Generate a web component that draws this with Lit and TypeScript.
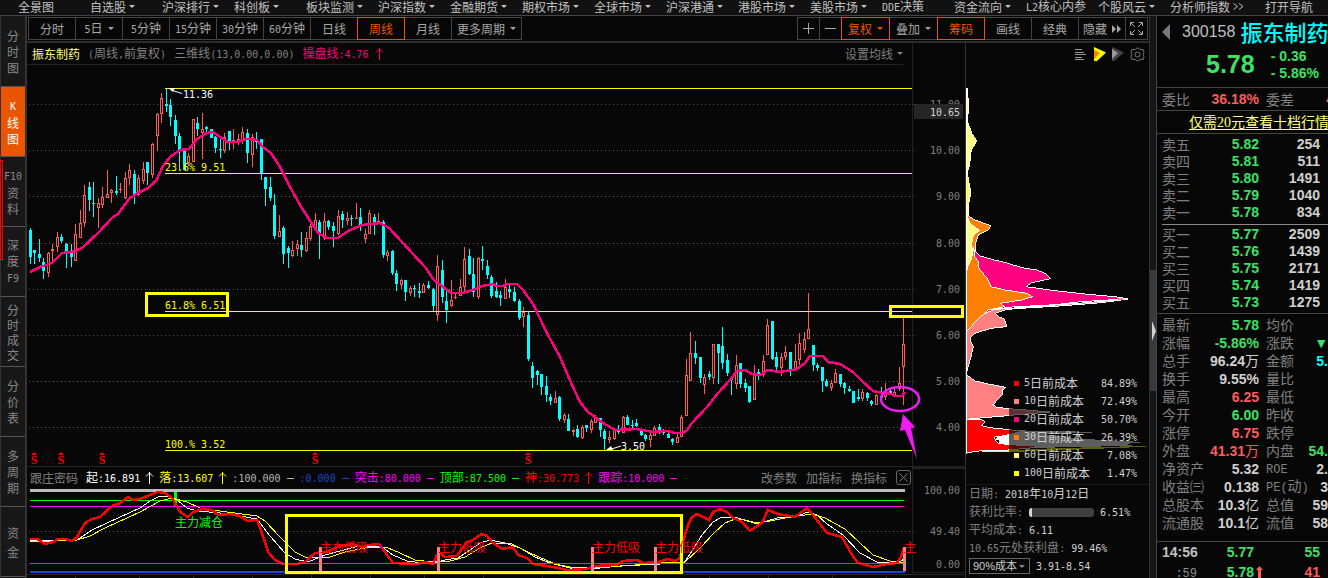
import { LitElement, html, svg, css } from 'lit';
import { customElement } from 'lit/decorators.js';
import { classMap } from 'lit/directives/class-map.js';

/** Wraps runs of ASCII characters so that they get the narrow figure face. */
const mix = (text: string) =>
  text.split(/([\x21-\x7e]+)/).map((part) => (/^[\x21-\x7e]+$/.test(part) ? html`<span class="m">${part}</span>` : part));

const caret = html`<i class="caret"></i>`;

/* direction (u/d), high, body top, body bottom, low: one record per week */
const CANDLES = `d228 230 257 264,d250 250 253 264,d239 254 258 262,d258 262 271 279,u252 253 273 277,u244 249 251 262,u232 237 247 252,d234 237 241 243,d243 244 251 268,d244 252 257 267,
u224 234 261 261,u210 223 238 238,u185 195 223 227,d182 187 200 211,d182 203 204 217,u198 203 208 228,u187 197 205 208,u170 194 198 198,u189 190 193 203,d176 191 193 195,
u183 189 190 193,u172 178 198 199,u164 170 178 185,d170 174 195 204,u175 178 195 196,u162 169 181 184,d162 162 173 185,u143 144 175 178,u113 114 136 151,u93 98 114 123,
d88 104 106 112,d99 105 117 126,d115 120 136 144,d133 136 150 170,d150 150 170 170,u153 156 163 166,u119 119 162 162,d117 123 129 136,u113 129 133 159,d126 127 129 132,
d129 129 138 138,d136 137 148 153,d138 149 150 158,u133 137 151 153,d131 131 141 150,u129 140 142 149,u134 139 141 145,u127 132 140 144,d129 133 153 163,u134 137 155 167,
d132 140 142 149,d139 139 173 180,d177 177 189 206,d177 187 198 201,d194 205 236 239,u215 231 237 237,d226 228 254 264,d246 248 253 268,u241 250 256 257,u240 244 249 256,
d232 245 250 257,u232 238 251 252,u220 226 239 241,u213 220 228 230,d220 222 234 259,u213 221 238 240,d220 221 227 230,d222 226 231 247,u210 216 234 235,d211 214 220 228,
u212 218 221 225,d215 218 219 226,u203 218 219 219,d208 217 226 231,u229 234 239 243,u210 213 234 234,d214 217 222 235,u213 221 223 223,d220 222 255 258,u250 252 256 261,
d250 251 273 275,d270 273 284 291,u279 280 285 289,d280 280 292 301,u286 288 293 296,d285 288 289 297,d283 291 293 298,u283 285 293 293,d281 285 288 289,d288 289 306 311,
u255 266 315 321,d260 270 297 303,d290 301 310 323,u280 300 306 307,u293 297 298 299,u279 287 296 296,u247 259 287 291,d249 256 274 275,d258 274 292 297,u257 258 297 299,
d246 259 261 270,d260 266 275 279,d275 277 296 298,d282 291 297 298,d291 295 298 306,u279 287 299 299,d285 289 292 298,d287 292 301 302,d299 301 318 320,u307 312 317 327,
d312 315 359 361,d362 366 378 388,d370 371 375 385,d374 374 387 395,d376 386 395 402,d394 397 401 405,u391 398 403 403,d396 397 419 421,u413 415 420 423,d414 419 431 431,
u429 430 432 436,d425 429 437 438,u425 427 438 439,d425 425 428 432,u419 421 430 433,u415 417 423 423,d418 418 430 437,d429 431 439 450,u431 437 440 443,u429 430 439 440,
d425 430 432 434,u416 417 433 433,d415 417 425 425,d420 425 426 428,d419 423 426 427,d430 430 435 436,d434 435 439 441,u432 435 440 447,u426 428 436 436,d424 427 432 434,
d429 431 433 435,d433 434 438 438,d438 439 442 445,u433 437 443 443,u415 417 437 437,u359 375 416 416,u332 353 381 381,d341 353 358 364,d357 357 378 383,u374 377 385 394,
d371 374 377 380,u344 344 378 384,d344 344 353 384,d327 346 363 369,d354 360 373 376,d376 377 380 395,u355 365 384 389,d363 363 384 388,d379 383 388 392,d386 386 402 403,
u365 375 400 400,d369 372 374 380,u355 361 375 377,u319 325 355 355,d321 321 359 360,d352 357 367 370,u353 357 368 376,u346 352 357 360,d352 352 370 376,u344 361 370 370,
u333 343 360 365,u332 339 350 353,u293 329 339 339,d345 345 365 371,d363 365 368 371,d367 367 381 392,d379 381 386 387,u380 383 388 391,u369 373 383 383,d374 374 384 387,
d382 383 388 394,d386 389 391 392,d391 391 403 403,d389 397 399 401,u389 392 399 401,d392 393 398 401,d400 401 404 406,u394 395 405 405,d387 396 398 400,u383 393 397 400,
d388 391 394 394,u388 392 395 395,u367 383 389 391,u318 344 367 405`
  .split(',')
  .map((s) => s.trim())
  .map((s) => ({ up: s[0] === 'u', v: s.slice(1).split(' ').map(Number) }));

const MA =
  '30,272 40,267 52,263 62,253 72,252 82,248 98,233 112,218 118,214 129,199 138,193 148,188 156,181 163,166 170,157 180,150 189,149 197,139 207,133 213,132 220,137 228,142 237,142 247,139 257,140 263,147 271,153 280,167 290,187 300,205 307,216 318,233 327,238 338,238 348,231 362,225 380,223 389,228 403,243 412,253 425,267 434,280 442,286 451,293 462,293 473,290 482,286 493,284 496,286 503,286 507,284 517,284 523,290 533,304 547,333 560,357 572,385 580,402 588,412 603,423 615,430 637,429 653,432 667,431 675,433 683,433 687,430 692,423 707,407 718,393 730,380 737,371 745,370 752,374 760,375 768,370 780,372 797,369 805,363 810,356 823,356 828,362 840,364 853,372 863,382 873,391 882,393 892,394 895,396 902,396 905,392';

const RED =
  '30,539 37,539 45,544 53,542 58,539 65,539 72,541 77,537 85,523 92,519 100,517 112,506 120,503 128,497 133,500 140,499 145,497 152,494 158,492 165,493 172,498 180,512 188,517 193,512 203,509 212,510 218,515 230,514 240,516 247,521 257,520 262,533 268,552 275,560 283,564 297,564 305,562 315,553 327,552 337,547 353,544 362,547 368,545 379,544 385,552 393,563 417,564 425,562 433,564 437,555 440,553 445,557 457,556 467,542 473,540 482,534 487,536 493,543 502,549 513,547 518,555 527,558 533,564 553,567 567,570 587,569 595,566 617,565 623,561 637,560 643,563 658,562 668,559 675,561 680,558 683,542 688,525 692,517 697,514 709,520 713,512 720,509 727,512 733,518 742,522 750,531 762,523 768,510 778,514 795,517 807,508 813,515 827,533 842,537 852,555 858,563 873,567 887,564 897,563 901,557 904,547';
const WHITE =
  '30,541 77,540 92,530 120,517 140,508 150,501 160,496 170,497 177,500 187,508 197,511 220,513 240,516 257,519 270,536 285,553 295,559 308,562 325,555 340,551 355,547 370,546 382,547 393,555 407,561 430,564 445,560 458,558 470,550 480,543 490,540 505,543 520,548 535,557 550,563 570,568 600,568 620,566 660,564 684,563 692,551 702,535 713,522 722,517 738,518 757,524 777,518 795,517 808,512 817,515 827,524 843,535 860,553 877,562 898,563 904,559';
const YELLOW =
  '30,542 77,540 90,536 105,528 140,512 160,501 172,498 187,502 200,508 220,511 257,516 265,521 280,537 295,552 305,557 315,558 330,557 345,552 370,547 388,548 400,553 415,560 433,562 450,561 465,557 480,548 492,543 512,544 530,553 555,564 575,568 610,567 660,563 685,562 700,548 715,532 725,523 735,519 745,520 757,523 770,521 790,517 812,514 825,518 845,529 860,543 873,555 890,561 905,563';

const MENU: [string, string][] = [
  ['全景图', ''], ['自选股', 'v'], ['沪深排行', 'v'], ['科创板', 'v'], ['板块监测', 'v'], ['沪深指数', 'v'], ['金融期货', 'v'],
  ['期权市场', 'v'], ['全球市场', 'v'], ['沪深港通', 'v'], ['港股市场', 'v'], ['美股市场', 'v'], ['DDE决策', ''], ['资金流向', 'v'],
  ['L2核心内参', ''], ['个股风云', 'v'], ['分析师指数', '>'], ['打开导航', ''],
];

const SIDE = [['分', '时', '图'], ['K', '线', '图'], ['F10', '资', '料'], ['深', '度', 'F9'], ['分', '时', '成', '交'], ['分', '价', '表'], ['多', '周', '期'], ['资', '金']];

const PERIODS = ['分时', '5日', '5分钟', '15分钟', '30分钟', '60分钟', '日线', '周线', '月线', '更多周期'];

const LEGEND = [
  ['#f00', '5日前成本', '84.89%'], ['#ff8080', '10日前成本', '72.49%'], ['#ff0080', '20日前成本', '50.70%'],
  ['#ff8000', '30日前成本', '26.39%'], ['#ffff80', '60日前成本', '7.08%'], ['#ff0', '100日前成本', '1.47%'],
];

const SELL = [['卖五', '5.82', '254'], ['卖四', '5.81', '511'], ['卖三', '5.80', '1491'], ['卖二', '5.79', '1040'], ['卖一', '5.78', '834']];
const BUY = [['买一', '5.77', '2509'], ['买二', '5.76', '1439'], ['买三', '5.75', '2171'], ['买四', '5.74', '1419'], ['买五', '5.73', '1275']];

const STATS = [
  ['最新', '5.78', 'g', '均价', '', 'g'], ['涨幅', '-5.86%', 'g', '涨跌', '▼', 'g'], ['总手', '96.24万', 'w', '金额', '5.', 'c'],
  ['换手', '9.55%', 'w', '量比', '', 'w'], ['最高', '6.25', 'r', '最低', '', 'g'], ['今开', '6.00', 'g', '昨收', '', 'w'],
  ['涨停', '6.75', 'r', '跌停', '', 'g'], ['外盘', '41.31万', 'r', '内盘', '54.', 'g'], ['净资产', '5.32', 'w', 'ROE', '2.', 'w'],
  ['收益㈢', '0.138', 'w', 'PE(动)', '3', 'w'], ['总股本', '10.3亿', 'w', '总值', '59', 'w'], ['流通股', '10.1亿', 'w', '流值', '58', 'w'],
];

const shared = css`
  * { box-sizing: border-box; }
  button { appearance: none; background: none; border: 0; margin: 0; padding: 0; font: inherit; color: inherit; white-space: nowrap; cursor: pointer; }
  .m { font-family: 'DejaVu Sans Mono', monospace; font-size: 10px; }
  .caret { display: inline-block; border: 3px solid transparent; border-top-color: currentColor; border-bottom: 0; }
  svg { display: block; }
  .r { color: #ff5b5b; }
  .g { color: #3de165; }
  .w { color: #d0d0d0; }
  .c { color: #0ff; }
`;

@customElement('k-chart')
class KChart extends LitElement {
  static styles = [
    shared,
    css`
      :host { display: block; }
      .head { display: flex; height: 22px; color: #808080; }
      .info { flex: 1; display: flex; align-items: center; gap: 8px; padding-left: 5px; margin-right: 9px; border-bottom: 1px solid #222; white-space: nowrap; }
      .name { color: #ffff80; }
      .pink { color: #ff0080; display: flex; align-items: center; gap: 6px; }
      .ma { margin-left: auto; display: flex; align-items: center; gap: 4px; }
      .axis { width: 54px; border-left: 1px solid #222; border-right: 1px solid #333; }
      svg.plot { width: 100%; height: auto; overflow: visible; }
      .sub { border-top: 1px solid #222; }
      .sub .axis { border-top: 2px solid #222; }
      .vals { flex: 1; display: flex; align-items: center; padding-left: 3px; white-space: nowrap; }
      .title { margin-right: 8px; }
      .mark { width: 19px; display: flex; justify-content: center; }
      .tools { margin-left: auto; display: flex; align-items: center; gap: 9px; padding-right: 1px; }
      .close { width: 15px; height: 15px; border: 1px solid #666; border-radius: 3px; display: flex; align-items: center; justify-content: center; }
      .num { font: 10px 'DejaVu Sans Mono', monospace; }
      .han { font: 12px 'Noto Sans CJK SC', sans-serif; }
    `,
  ];

  private arrow = () => html`<svg width="9" height="12" viewBox="0 0 9 12" fill="none" stroke="currentColor"><path d="M4.500 0v12M1 4.500L4.500 1 8 4.500" /></svg>`;

  private annotate(x: number, y: number, text: string) {
    return svg`<text class="han" x=${x} y=${y} fill="red">${text}</text>`;
  }

  render() {
    const dotted = (y: number, to = 912) => svg`<line x1="29" x2=${to} y1=${y} y2=${y} stroke="#555" stroke-dasharray="1 3" />`;
    const vals: [string, string, string][] = [
      ['起:16.891', '#fff', 'a'], ['落:13.607', '#ff0', 'a'], [':100.000', '#b8b8b8', '-'], [':0.000', '#1e46d2', '-'],
      ['突击:80.000', '#f0f', '-'], ['顶部:87.500', '#0f0', '-'], ['神:30.773', '#f00', 'a'], ['跟踪:10.000', '#f0f', '-'],
    ];
    return html`
      <div class="head">
        <div class="info">
          <span class="name">振东制药</span><span>${mix('(周线,前复权)')}</span><span>${mix('三维线(13,0.00,0.00)')}</span>
          <span class="pink"><span>${mix('操盘线:4.76')}</span>${this.arrow()}</span>
          <button class="ma">设置均线${caret}</button>
        </div>
        <div class="axis"></div>
      </div>
      <svg class="plot" viewBox="27 65 939 401">
        <g shape-rendering="crispEdges">
          ${[104.5, 150.5, 196.5, 243.5, 289.5, 335.5, 381.5, 427.5].map((y) => dotted(y, 915))}
          <path d="M912.500 65V466" stroke="#222" /><path d="M965.500 65V466" stroke="#333" />
          ${CANDLES.map(({ up, v: [hi, top, bot, lo] }, i) => {
            const x = Math.floor(30.3 + 4.525 * i);
            return up
              ? svg`<rect x=${x} y=${hi} width="1" height=${Math.max(lo - hi, 1)} fill="#ff5b5b" /><rect x=${x - 1} y=${top} width="3" height=${Math.max(bot - top, 1)} fill="#ff5b5b" /><rect x=${x} y=${top + 1} width="1" height=${Math.max(bot - top - 2, 0)} fill="#070707" />`
              : svg`<rect x=${x} y=${hi} width="1" height=${Math.max(lo - hi, 1)} fill="#0ff" /><rect x=${x - 1} y=${top} width="3" height=${bot - top} fill="#0ff" />`;
          })}
          <path d="M165 88.500H912M165 173.500H912M165 311.500H912M165 450.500H912" stroke="#ff0" />
          <polyline points=${MA} fill="none" stroke="#ff0080" stroke-width="2.500" />
          <rect x="146.500" y="293.500" width="81" height="22" fill="none" stroke="#ff0" stroke-width="3" />
          <rect x="890.500" y="306.500" width="72" height="10" fill="none" stroke="#ff0" stroke-width="3" />
        </g>
        <g class="num" fill="#ff0">
          <text x="165" y="171">23.6% 9.51</text><text x="165" y="309">61.8% 6.51</text><text x="165" y="448">100.% 3.52</text>
        </g>
        <g class="num" fill="#fff"><text x="183" y="98">11.36</text><text x="621" y="450">3.50</text></g>
        <path d="M182 93.500L171 90M621 446L610 449.500" stroke="#fff" fill="none" />
        <path d="M168 88h7l-2 4zM606 450h7l-2-4z" fill="#fff" />
        <g fill="red" font-family="Liberation Serif, serif" font-size="12" font-weight="bold">
          ${[34, 61, 102, 315, 528].map((x) => svg`<text x=${x} y="464" text-anchor="middle">S</text><path d=${`M${x - 3} 455l3-3 3 3z`} />`)}
        </g>
        <g class="num" fill="#808080" text-anchor="end">
          ${['11.00', '10.00', '9.00', '8.00', '7.00', '6.00', '5.00', '4.00'].map((t, i) => svg`<text x="960" y=${Math.round(108 + i * 46.2)}>${t}</text>`)}
        </g>
        <rect x="914" y="104" width="49" height="15" rx="1" fill="#262626" />
        <text class="num" x="960" y="116" text-anchor="end" fill="#d0d0d0">10.65</text>
        <ellipse cx="900" cy="399" rx="19" ry="12" fill="none" stroke="#f21af5" stroke-width="2.500" />
        <path d="M903 414L915 427 911 428 917 459 905 430 900 431z" fill="#f21af5" />
      </svg>
      <div class="head sub">
        <div class="vals">
          <span class="title">跟庄密码</span>
          ${vals.map(([t, color, k]) => html`<span style="color:${color}">${mix(t)}</span><span class="mark" style="color:${color}">${k === 'a' ? this.arrow() : html`<svg width="7" height="2"><rect width="7" height="1" y="1" fill="currentColor" /></svg>`}</span>`)}
          <div class="tools">
            <button>改参数</button><button>加指标</button><button>换指标</button>
            <button class="close" aria-label="关闭"><svg width="9" height="9" stroke="currentColor"><path d="M.5 .5l8 8M8.500 .5l-8 8" /></svg></button>
          </div>
        </div>
        <div class="axis"></div>
      </div>
      <svg class="plot" viewBox="27 488 939 90">
        <g shape-rendering="crispEdges" fill="none">
          ${dotted(531.5, 915)}
          <path d="M912.500 488V572.500M913 572.500H965.500" stroke="#222" /><path d="M965.500 488V578" stroke="#333" />
          <path d="M30 490.500H905" stroke="#bbb" stroke-width="3" />
          <path d="M30 500.500H904" stroke="#0f0" /><path d="M30 506.500H904" stroke="#f0f" />
          <rect x="174" y="492" width="3" height="14" fill="#0f0" />
          <path d="M30 572H905" stroke="#1e46d2" stroke-width="2" />
          <polyline points=${WHITE} stroke="#fff" /><polyline points=${YELLOW} stroke="#ff0" />
          <polyline points=${RED} stroke="#f00" stroke-width="2.500" />
          <path d="M30 563.500H904" stroke="#f0f" />
          ${[319, 437, 591, 654, 903].map((x) => svg`<rect x=${x} y="547" width="3" height="24" fill="#ff8080" />`)}
          <path d="M27 574.500H965M75.500 575v3M139.500 575v3M193.500 575v3M252.500 575v3M311.500 575v3M370.500 575v3M424.500 575v3M483.500 575v3M542.500 575v3M709.500 575v3M768.500 575v3M832.500 575v3M886.500 575v3" stroke="#2a2a2a" />
          <rect x="286.500" y="515.500" width="395" height="57" stroke="#ff0" stroke-width="3" />
        </g>
        <text class="han" x="175" y="527" fill="#0f0">主力减仓</text>
        ${[320, 438, 592, 655].map((x) => this.annotate(x, 552, '主力低吸'))} ${this.annotate(904, 552, '主')}
        <g class="num" fill="#808080" text-anchor="end"><text x="960" y="494">100.00</text><text x="960" y="535">49.40</text><text x="960" y="568">0.00</text></g>
      </svg>
    `;
  }
}

@customElement('chip-panel')
class ChipPanel extends LitElement {
  static styles = [
    shared,
    css`
      :host { display: block; width: 183px; color: #808080; }
      .bar { height: 22px; display: flex; align-items: center; justify-content: flex-end; gap: 6px; padding-right: 4px; }
      .dist { position: relative; border-bottom: 1px solid #1a1a1a; }
      .dist svg { width: 100%; height: auto; }
      .legend { position: absolute; right: 2px; bottom: 2px; margin: 0; padding: 0 10px 0 5px; width: 138px; list-style: none; background: rgba(7, 7, 7, 0.65); color: #d0d0d0; }
      .legend li { height: 18px; display: flex; align-items: center; white-space: nowrap; }
      .legend i { width: 5px; height: 5px; margin-right: 5px; }
      .legend .pct { margin-left: auto; }
      .facts { padding-left: 3px; }
      .fact { height: 18px; display: flex; align-items: center; gap: 6px; white-space: nowrap; }
      .val { color: #d0d0d0; }
      .meter { width: 65px; height: 9px; border-radius: 3px; background: #404040; }
      .meter i { display: block; height: 100%; border-radius: 3px 0 0 3px; background: #d8d8d8; }
      .pick { position: relative; display: flex; align-items: center; color: #888; }
      select { appearance: none; width: 61px; height: 16px; margin: 0; padding: 0 0 0 3px; border: 1px solid #666; border-radius: 0; background: #070707; color: #d0d0d0; font: 11px/14px 'Liberation Sans', 'Noto Sans CJK SC', sans-serif; }
      .pick .caret { position: absolute; right: 5px; pointer-events: none; }
    `,
  ];

  render() {
    return html`
      <div class="bar">
        <button aria-label="筹码分布"><svg width="12" height="12" stroke="#999"><path d="M0 1.500h7M0 4.500h9M0 6.500h11M0 9.500h7M0 11.500h9" shape-rendering="crispEdges" /></svg></button>
        <button aria-label="火焰山"><svg width="13" height="14"><path d="M1 0l12 5.500L4 14H1z" fill="#ff0" /><path d="M1 3l6 3-6 6z" fill="#ff8000" /></svg></button>
        <button aria-label="活跃度"><svg width="12" height="14"><path d="M0 0l12 5.500L2 14H0z" fill="#444" /><path d="M0 2l6 4-6 6z" fill="#999" /></svg></button>
        <button aria-label="设置"><svg width="15" height="15" fill="none" stroke="#777"><path d="M7.500 .8l2 1.500 3.700.4.800 3-.9 1.800.9 1.800-.8 3-3.700.4-2 1.500-2-1.500-3.700-.4-.8-3 .9-1.800-.9-1.800.8-3 3.700-.4z" /><circle cx="7.500" cy="7.500" r="2.500" /></svg></button>
      </div>
      <div class="dist">
        <svg viewBox="966 65 183 419">
          <g transform="translate(955 80) scale(.33333)" stroke="#fff" stroke-width="3" shape-rendering="crispEdges">
            <path d="M36 24L40 65 42 90 38 105V125L45 145 50 160 65 183 55 200 48 215 45 242 42 260 38 275V285L44 320 48 340 42 365 40 405 36 410z" fill="#ffff80" />
            <path d="M38 285v85" stroke="#ff0" stroke-width="5" />
            <path d="M36 405L60 420 108 437 102 448 70 465 62 490V515L50 560H36z" fill="#ff8000" />
            <path d="M150 686L370 670 520 657 440 668 300 679 180 686 150 690 120 700 130 710 148 716 155 740 108 745 60 760 48 770V785L55 800 48 830 38 865 36 872V740L100 690z" fill="#ff8080" />
            <path d="M58 512L75 528 110 538 160 550 200 563 245 570 270 580 287 596 230 608 213 620 300 632 400 643 480 650 520 657 440 661 370 666 300 674 170 681 120 688 90 700 50 640z" fill="#ff0080" />
            <path d="M490 654L518 657 490 660z" fill="#ff8080" stroke="none" />
            <path d="M36 500H55L60 530 70 545 72 565 100 600 108 620 150 630 215 640 233 650 200 660 135 670 150 680 100 690 75 712 36 752z" fill="#ff8000" />
            <path d="M36 408L45 430 75 452 55 465 50 490 52 520 50 535 38 560 36 570z" fill="#ffff80" />
            <path d="M36 885L60 903 100 912 152 922 142 930V945L125 960 120 970 112 974 125 982 162 986 285 996 200 1003 125 1010 50 1016 36 1018z" fill="#ff8080" />
            <path d="M162 1052L412 1057 250 1062 380 1078 554 1087 480 1092 530 1096 162 1104z" fill="#fff" />
            <path d="M80 1116L300 1106 572 1099 250 1112z" fill="#ff0" stroke="#ff0" />
            <path d="M36 1018H80L90 1027 78 1037 105 1043 200 1053 160 1066 120 1070 118 1076 130 1090 165 1094 270 1100 160 1110 80 1112 36 1118z" fill="#f00" />
            <path d="M162 1064L130 1070 122 1076 135 1082V1092H162z" fill="#fff" />
            <path d="M36 30V1122" />
          </g>
        </svg>
        <ul class="legend">
          ${LEGEND.map(([c, t, p]) => html`<li><i style="background:${c}"></i>${mix(t)}<span class="pct">${mix(p)}</span></li>`)}
        </ul>
      </div>
      <div class="facts">
        <div class="fact"><span>${mix('日期:')}</span><span class="val">${mix('2018年10月12日')}</span></div>
        <div class="fact"><span>${mix('获利比率:')}</span><span class="meter"><i style="width:5%"></i></span><span class="val">${mix('6.51%')}</span></div>
        <div class="fact"><span>${mix('平均成本:')}</span><span class="val">${mix('6.11')}</span></div>
        <div class="fact"><span>${mix('10.65元处获利盘:')}</span><span class="val">${mix('99.46%')}</span></div>
        <div class="fact"><label class="pick"><select aria-label="成本区间"><option>90%成本</option></select>${caret}</label><span class="val">${mix('3.91-8.54')}</span></div>
      </div>
    `;
  }
}

@customElement('quote-panel')
class QuotePanel extends LitElement {
  static styles = [
    shared,
    css`
      :host { display: block; width: 172px; border-left: 1px solid #444; overflow: hidden; color: #808080; font-size: 14px; white-space: nowrap; }
      b { font: bold 14px 'Liberation Sans', sans-serif; }
      .m { font-family: 'Liberation Mono', monospace; font-size: 12px; }
      .head { height: 71px; padding-left: 5px; }
      .title { height: 32px; display: flex; align-items: center; }
      .code { font: 16px 'Liberation Sans', sans-serif; color: #c0c0c0; margin: 0 5px 0 12px; }
      .name { font-size: 22px; line-height: 30px; padding-bottom: 2px; color: #0ff; font-weight: 500; }
      .last { height: 33px; display: flex; align-items: center; gap: 16px; padding-left: 44px; color: #3de165; }
      .price { font: bold 25px 'Liberation Sans', sans-serif; }
      .chg { display: flex; flex-direction: column; }
      .chg b { line-height: 17px; }
      .line { border-top: 1px solid #444; padding-left: 5px; }
      .row { display: flex; align-items: center; line-height: 16px; }
      .pair { width: 97px; display: flex; align-items: center; justify-content: space-between; margin-right: 7px; }
      .end { margin-left: auto; }
      .cut { margin-right: -6px; }
      .qty { margin-left: auto; padding-right: 8px; }
      .tall { height: 22px; }
      .link { height: 22px; display: flex; align-items: center; padding-left: 27px; }
      a { color: #ffff80; text-decoration: underline; text-underline-offset: 2px; }
      a .m { font-family: 'Liberation Serif', serif; font-size: 14px; }
      .sell { padding-top: 1px; padding-bottom: 4px; }
      .book .row { height: 17px; }
      .buy { margin-left: 5px; padding-bottom: 3px; border-top: 1px solid #888; }
      .stats { padding-top: 1px; padding-bottom: 10px; }
      .stats .row { height: 18px; }
      .ticks .row { height: 20px; }
      .ticks .pair { width: 92px; }
      .time { width: 35px; text-align: right; color: #c0c0c0; }
      .sec { color: #909090; }
      .up { position: relative; }
      .up svg { position: absolute; left: 100%; top: 2px; margin-left: 2px; }
    `,
  ];

  private num = (t: string) => t.split(/([\x21-\x7e▼]+)/).map((p) => (/^[\x21-\x7e▼]+$/.test(p) ? html`<b>${p}</b>` : p));

  private book = (rows: string[][]) =>
    rows.map(([l, p, q]) => html`<div class="row"><div class="pair"><span>${l}</span><b class="g">${p}</b></div><b class="qty w">${q}</b></div>`);

  render() {
    return html`
      <div class="head">
        <div class="title">
          <button aria-label="上一只"><svg width="8" height="16"><path d="M8 0v16L0 8z" fill="#777" /></svg></button>
          <span class="code">300158</span><span class="name">振东制药</span>
        </div>
        <div class="last"><span class="price">5.78</span><span class="chg"><b>- 0.36</b><b>- 5.86%</b></span></div>
      </div>
      <div class="line"><div class="row tall"><div class="pair"><span>委比</span><b class="r">36.18%</b></div><span>委差</span><b class="end cut r">4</b></div></div>
      <div class="line"><div class="link"><a href="#level2">${mix('仅需20元查看十档行情')}</a></div></div>
      <div class="line book sell">${this.book(SELL)}</div>
      <div class="book buy">${this.book(BUY)}</div>
      <div class="line stats">
        ${STATS.map(([l, v, c, l2, v2, c2]) => html`<div class="row"><div class="pair"><span>${mix(l)}</span><span class=${c}>${this.num(v)}</span></div><span>${mix(l2)}</span><span class="end ${c2}">${this.num(v2)}</span></div>`)}
      </div>
      <div class="line ticks">
        <div class="row"><div class="pair"><b class="time">14:56</b><b class="g">5.77</b></div><b class="qty g">55</b></div>
        <div class="row"><div class="pair"><span class="time sec"><span class="m">:59</span></span><b class="g up">5.78<svg width="7" height="13"><path d="M3.500 0L7 4H5v9H2V4H0z" fill="#ff5b5b" /></svg></b></div><b class="qty r">41</b></div>
      </div>
    `;
  }
}

@customElement('app-root')
class AppRoot extends LitElement {
  static styles = [
    shared,
    css`
      :host { display: flex; flex-direction: column; height: 100vh; overflow: hidden; background: #070707; color: #c0c0c0; font: 12px/16px 'Noto Sans CJK SC', sans-serif; }
      .menu { height: 16px; flex: none; display: flex; padding-left: 18px; background: #111; border-bottom: 1px solid #444; }
      .menu button { flex: 0 0 72px; display: flex; align-items: center; gap: 3px; height: 13px; line-height: 12px; }
      .menu .wide { flex-basis: 95px; }
      .body { flex: 1; display: flex; min-height: 0; }
      .side { width: 27px; flex: none; padding-top: 1px; border: solid #333; border-width: 0 2px 0 1px; background: #181818; color: #888; position: relative; }
      .side button { width: 100%; height: 70px; display: flex; flex-direction: column; align-items: center; justify-content: center; border-bottom: 1px solid #555; line-height: 16px; }
      .side .on { background: #ea5504; color: #fff; }
      .side .four { line-height: 15px; }
      .side .two { line-height: 19px; }
      .flag { position: absolute; left: -1px; top: 144px; width: 3px; height: 100px; border: 1px solid #f00; }
      .center { flex: 1; min-width: 0; }
      .bar { display: flex; padding: 1px; border-bottom: 2px solid #2c2c2c; color: #a8a8a8; }
      .bar button { height: 23px; width: 48px; margin-right: -1px; border: 1px solid #444; display: flex; align-items: center; justify-content: center; gap: 5px; }
      .bar .w49 { width: 49px; }
      .bar .w71 { width: 71px; }
      .bar .w23 { width: 23px; }
      .bar .on { position: relative; z-index: 1; border-color: #ea5504; color: #ea5504; }
      .right { margin-left: auto; display: flex; padding-right: 1px; }
      .charts { display: flex; }
      k-chart { flex: 1; min-width: 0; }
      .split { width: 7px; flex: none; border-left: 1px solid #333; background: #151515; padding-top: 254px; }
      .split button { width: 7px; height: 121px; background: #3a3a3a; display: flex; align-items: center; padding-left: 2px; }
      quote-panel { flex: none; }
    `,
  ];

  render() {
    return html`
      <div class="menu">
        ${MENU.map(([t, k]) => html`<button class=${classMap({ wide: k === '>' })}><span>${mix(t)}</span>${k === 'v' ? caret : k === '>' ? html`<svg width="11" height="7" fill="none" stroke="currentColor"><path d="M.5 .5l4 3-4 3M6 .5l4 3-4 3" /></svg>` : ''}</button>`)}
      </div>
      <div class="body">
        <nav class="side">
          ${SIDE.map((s, i) => html`<button class=${classMap({ on: i === 1, four: s.length === 4, two: s.length === 2 })}>${s.map((c) => html`<span>${mix(c)}</span>`)}</button>`)}
          <span class="flag"></span>
        </nav>
        <div class="center">
          <div class="bar">
            ${PERIODS.map((t, i) => html`<button class=${classMap({ on: t === '周线', w71: i === 9 })}><span>${mix(t)}</span>${i === 1 || i === 9 ? caret : ''}</button>`)}
            <div class="right">
              <button class="w23" aria-label="放大"><svg width="11" height="11" stroke="currentColor"><path d="M0 5.500h11M5.500 0v11" /></svg></button>
              <button class="w23" aria-label="缩小"><svg width="11" height="11" stroke="currentColor"><path d="M0 5.500h11" /></svg></button>
              <button class="on w49"><span>复权</span>${caret}</button>
              <button class="w49"><span>叠加</span>${caret}</button>
              <button class="on">筹码</button><button>画线</button><button>经典</button>
              <button><span>隐藏</span><svg width="9" height="8" fill="currentColor"><path d="M0 0l4 4-4 4zM5 0l4 4-4 4z" /></svg></button>
              <button class="w23" aria-label="全屏"><svg width="13" height="13" fill="none" stroke="currentColor"><path d="M.5 4V.5H4M9 .5h3.500V4M12.500 9v3.500H9M4 12.500H.5V9M1 1l4 4M12 1L8 5M12 12L8 8M1 12l4-4" /></svg></button>
            </div>
          </div>
          <div class="charts"><k-chart></k-chart><chip-panel></chip-panel></div>
        </div>
        <div class="split"><button aria-label="收起"><svg width="4" height="20"><path d="M0 0l4 10-4 10z" fill="#d0d0d0" /></svg></button></div>
        <quote-panel></quote-panel>
      </div>
    `;
  }
}
